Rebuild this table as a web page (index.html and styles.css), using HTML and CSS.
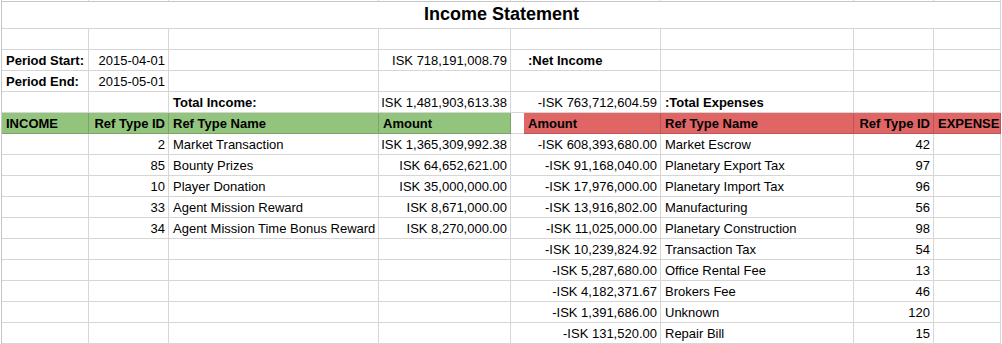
FILE: index.html
```html
<!DOCTYPE html>
<html>
<head>
<meta charset="utf-8">
<title>Income Statement</title>
<link rel="stylesheet" href="styles.css">
</head>
<body>
<div class="sheet">
  <!-- sliver of the row scrolled above -->
  <div class="c sl"></div><div class="c sl"></div><div class="c sl"></div><div class="c sl"></div><div class="c sl"></div><div class="c sl"></div><div class="c sl"></div><div class="c sl"></div><div class="c sl"></div>

  <div class="c title">Income Statement</div>

  <div class="c"></div><div class="c"></div><div class="c"></div><div class="c"></div><div class="c gap"></div><div class="c"></div><div class="c"></div><div class="c"></div><div class="c"></div>

  <div class="c b">Period Start:</div><div class="c r n">2015-04-01</div><div class="c"></div><div class="c r n">ISK 718,191,008.79</div><div class="c gap"></div><div class="c b">:Net Income</div><div class="c"></div><div class="c"></div><div class="c"></div>

  <div class="c b">Period End:</div><div class="c r n">2015-05-01</div><div class="c"></div><div class="c"></div><div class="c gap"></div><div class="c"></div><div class="c"></div><div class="c"></div><div class="c"></div>

  <div class="c"></div><div class="c"></div><div class="c b">Total Income:</div><div class="c r n">ISK 1,481,903,613.38</div><div class="c gap"></div><div class="c r n">-ISK 763,712,604.59</div><div class="c b ov">:Total Expenses</div><div class="c"></div><div class="c"></div>

  <div class="c b inc">INCOME</div><div class="c b inc r">Ref Type ID</div><div class="c b inc">Ref Type Name</div><div class="c b inc">Amount</div><div class="c gap hd"></div><div class="c b exp">Amount</div><div class="c b exp">Ref Type Name</div><div class="c b exp r">Ref Type ID</div><div class="c b exp">EXPENSE</div>

  <div class="c"></div><div class="c r n">2</div><div class="c">Market Transaction</div><div class="c r n">ISK 1,365,309,992.38</div><div class="c gap"></div><div class="c r n">-ISK 608,393,680.00</div><div class="c">Market Escrow</div><div class="c r n">42</div><div class="c"></div>

  <div class="c"></div><div class="c r n">85</div><div class="c">Bounty Prizes</div><div class="c r n">ISK 64,652,621.00</div><div class="c gap"></div><div class="c r n">-ISK 91,168,040.00</div><div class="c">Planetary Export Tax</div><div class="c r n">97</div><div class="c"></div>

  <div class="c"></div><div class="c r n">10</div><div class="c">Player Donation</div><div class="c r n">ISK 35,000,000.00</div><div class="c gap"></div><div class="c r n">-ISK 17,976,000.00</div><div class="c">Planetary Import Tax</div><div class="c r n">96</div><div class="c"></div>

  <div class="c"></div><div class="c r n">33</div><div class="c">Agent Mission Reward</div><div class="c r n">ISK 8,671,000.00</div><div class="c gap"></div><div class="c r n">-ISK 13,916,802.00</div><div class="c">Manufacturing</div><div class="c r n">56</div><div class="c"></div>

  <div class="c"></div><div class="c r n">34</div><div class="c">Agent Mission Time Bonus Reward</div><div class="c r n">ISK 8,270,000.00</div><div class="c gap"></div><div class="c r n">-ISK 11,025,000.00</div><div class="c">Planetary Construction</div><div class="c r n">98</div><div class="c"></div>

  <div class="c"></div><div class="c"></div><div class="c"></div><div class="c"></div><div class="c gap"></div><div class="c r n">-ISK 10,239,824.92</div><div class="c">Transaction Tax</div><div class="c r n">54</div><div class="c"></div>

  <div class="c"></div><div class="c"></div><div class="c"></div><div class="c"></div><div class="c gap"></div><div class="c r n">-ISK 5,287,680.00</div><div class="c">Office Rental Fee</div><div class="c r n">13</div><div class="c"></div>

  <div class="c"></div><div class="c"></div><div class="c"></div><div class="c"></div><div class="c gap"></div><div class="c r n">-ISK 4,182,371.67</div><div class="c">Brokers Fee</div><div class="c r n">46</div><div class="c"></div>

  <div class="c"></div><div class="c"></div><div class="c"></div><div class="c"></div><div class="c gap"></div><div class="c r n">-ISK 1,391,686.00</div><div class="c">Unknown</div><div class="c r n">120</div><div class="c"></div>

  <div class="c"></div><div class="c"></div><div class="c"></div><div class="c"></div><div class="c gap"></div><div class="c r n">-ISK 131,520.00</div><div class="c">Repair Bill</div><div class="c r n">15</div><div class="c"></div>
</div>
</body>
</html>
```

FILE: styles.css
```css
html, body {
  margin: 0;
  padding: 0;
  background: #ffffff;
}

body {
  font-family: "Liberation Sans", Arial, sans-serif;
  font-size: 13px;
  color: #000000;
}

.sheet {
  margin-left: 1px;
  width: 1000px;
  box-sizing: border-box;
  border-left: 1px solid #c6c6c6;
  display: grid;
  grid-template-columns: 87px 80px 210px 132px 13px 137px 193px 80px 67px;
  grid-template-rows: 2px 27px repeat(15, 21px);
}

.c {
  box-sizing: border-box;
  border-right: 1px solid rgba(0, 0, 0, 0.16);
  border-bottom: 1px solid rgba(0, 0, 0, 0.16);
  display: flex;
  align-items: flex-end;
  justify-content: flex-start;
  padding: 0 3px 2px 4px;
  line-height: 15px;
  white-space: nowrap;
  min-width: 0;
}

.sl {
  padding: 0;
  border-bottom-color: #c6c6c6;
}

.gap {
  border-right: none;
}

.title {
  grid-column: 1 / -1;
  justify-content: center;
  font-size: 18px;
  font-weight: bold;
  line-height: 20px;
  padding-bottom: 4px;
}

.b {
  font-weight: bold;
}

.r {
  justify-content: flex-end;
}

.ov {
  overflow: visible;
}

.inc {
  background: #93c47d;
}

.exp {
  background: #e06666;
}
```
